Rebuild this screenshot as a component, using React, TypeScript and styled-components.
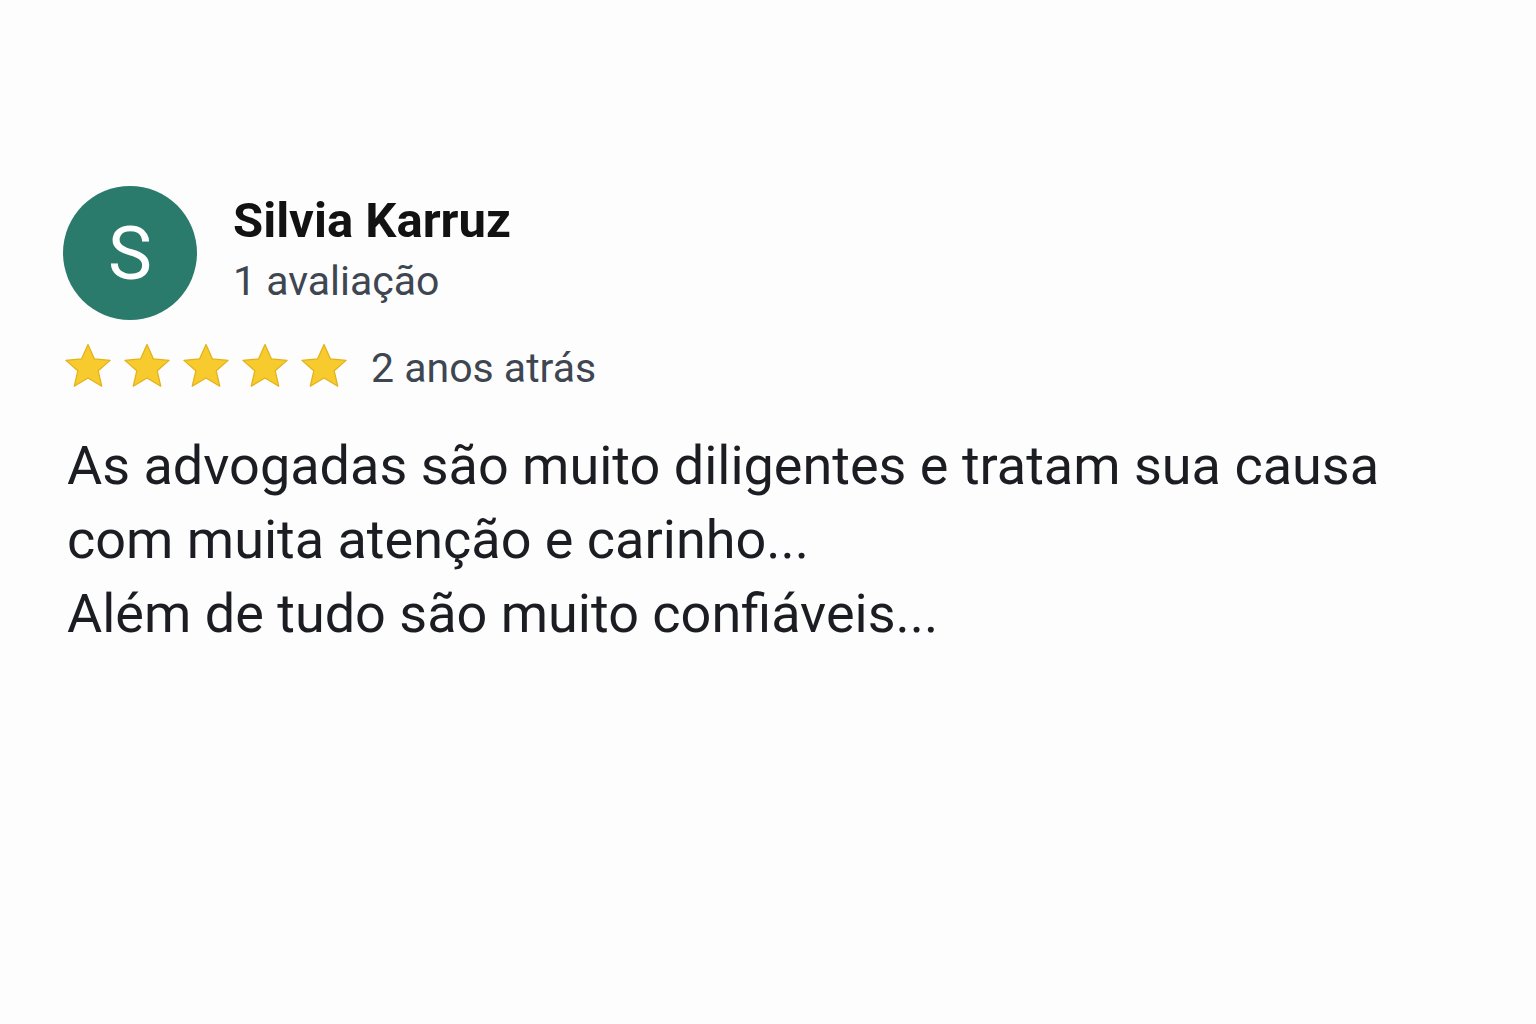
import React from 'react';
import styled, { createGlobalStyle } from 'styled-components';

const GlobalStyle = createGlobalStyle`
  html, body {
    margin: 0;
    padding: 0;
    background: #fdfdfd;
  }
  body {
    font-family: Roboto, "Noto Sans", "Liberation Sans", sans-serif;
  }
`;

const Page = styled.div`
  width: 1536px;
  height: 1024px;
  box-sizing: border-box;
  padding: 186px 0 0 63px;
  background: #fdfdfd;
`;

const Card = styled.div`
  display: flex;
  flex-direction: column;
`;

const Header = styled.div`
  display: flex;
  align-items: flex-start;
  gap: 36px;
`;

const Avatar = styled.div`
  width: 134px;
  height: 134px;
  border-radius: 50%;
  background: #2a7b6c;
  color: #ffffff;
  display: flex;
  align-items: center;
  justify-content: center;
  font-size: 74px;
  font-weight: 400;
  flex-shrink: 0;
`;

const Author = styled.div`
  display: flex;
  flex-direction: column;
  padding-top: 9px;
`;

const Name = styled.div`
  font-size: 49px;
  font-weight: 700;
  color: #121212;
  line-height: 52px;
`;

const Meta = styled.div<{ $offset?: number }>`
  font-size: 41px;
  color: #3e4652;
  line-height: 48px;
  margin-top: ${p => p.$offset || 0}px;
`;

const RatingRow = styled.div`
  display: flex;
  align-items: center;
  margin-top: 20px;
  gap: 22px;
`;

const Stars = styled.div`
  display: flex;
  gap: 9px;
`;

const Body = styled.p`
  margin: 37px 0 0 4px;
  font-size: 54px;
  line-height: 74px;
  color: #1b1d22;
  max-width: 1400px;
`;

const Star = () => (
  <svg width="50" height="48" viewBox="0 0 24 23">
    <path
      d="M12 1.2l3.1 6.9 7.5.7-5.7 5 1.7 7.4L12 17.3l-6.6 3.9 1.7-7.4-5.7-5 7.5-.7z"
      fill="#f7cb2d"
      stroke="#e2b21a"
      strokeWidth="0.6"
      strokeLinejoin="round"
    />
  </svg>
);

export default function App() {
  return (
    <>
      <GlobalStyle />
      <Page>
        <Card>
          <Header>
            <Avatar>S</Avatar>
            <Author>
              <Name>Silvia Karruz</Name>
              <Meta $offset={10}>1 avaliação</Meta>
            </Author>
          </Header>
          <RatingRow>
            <Stars>
              {[0, 1, 2, 3, 4].map(i => (
                <Star key={i} />
              ))}
            </Stars>
            <Meta $offset={4}>2 anos atrás</Meta>
          </RatingRow>
          <Body>
            As advogadas são muito diligentes e tratam sua causa
            <br />
            com muita atenção e carinho...
            <br />
            Além de tudo são muito confiáveis...
          </Body>
        </Card>
      </Page>
    </>
  );
}
